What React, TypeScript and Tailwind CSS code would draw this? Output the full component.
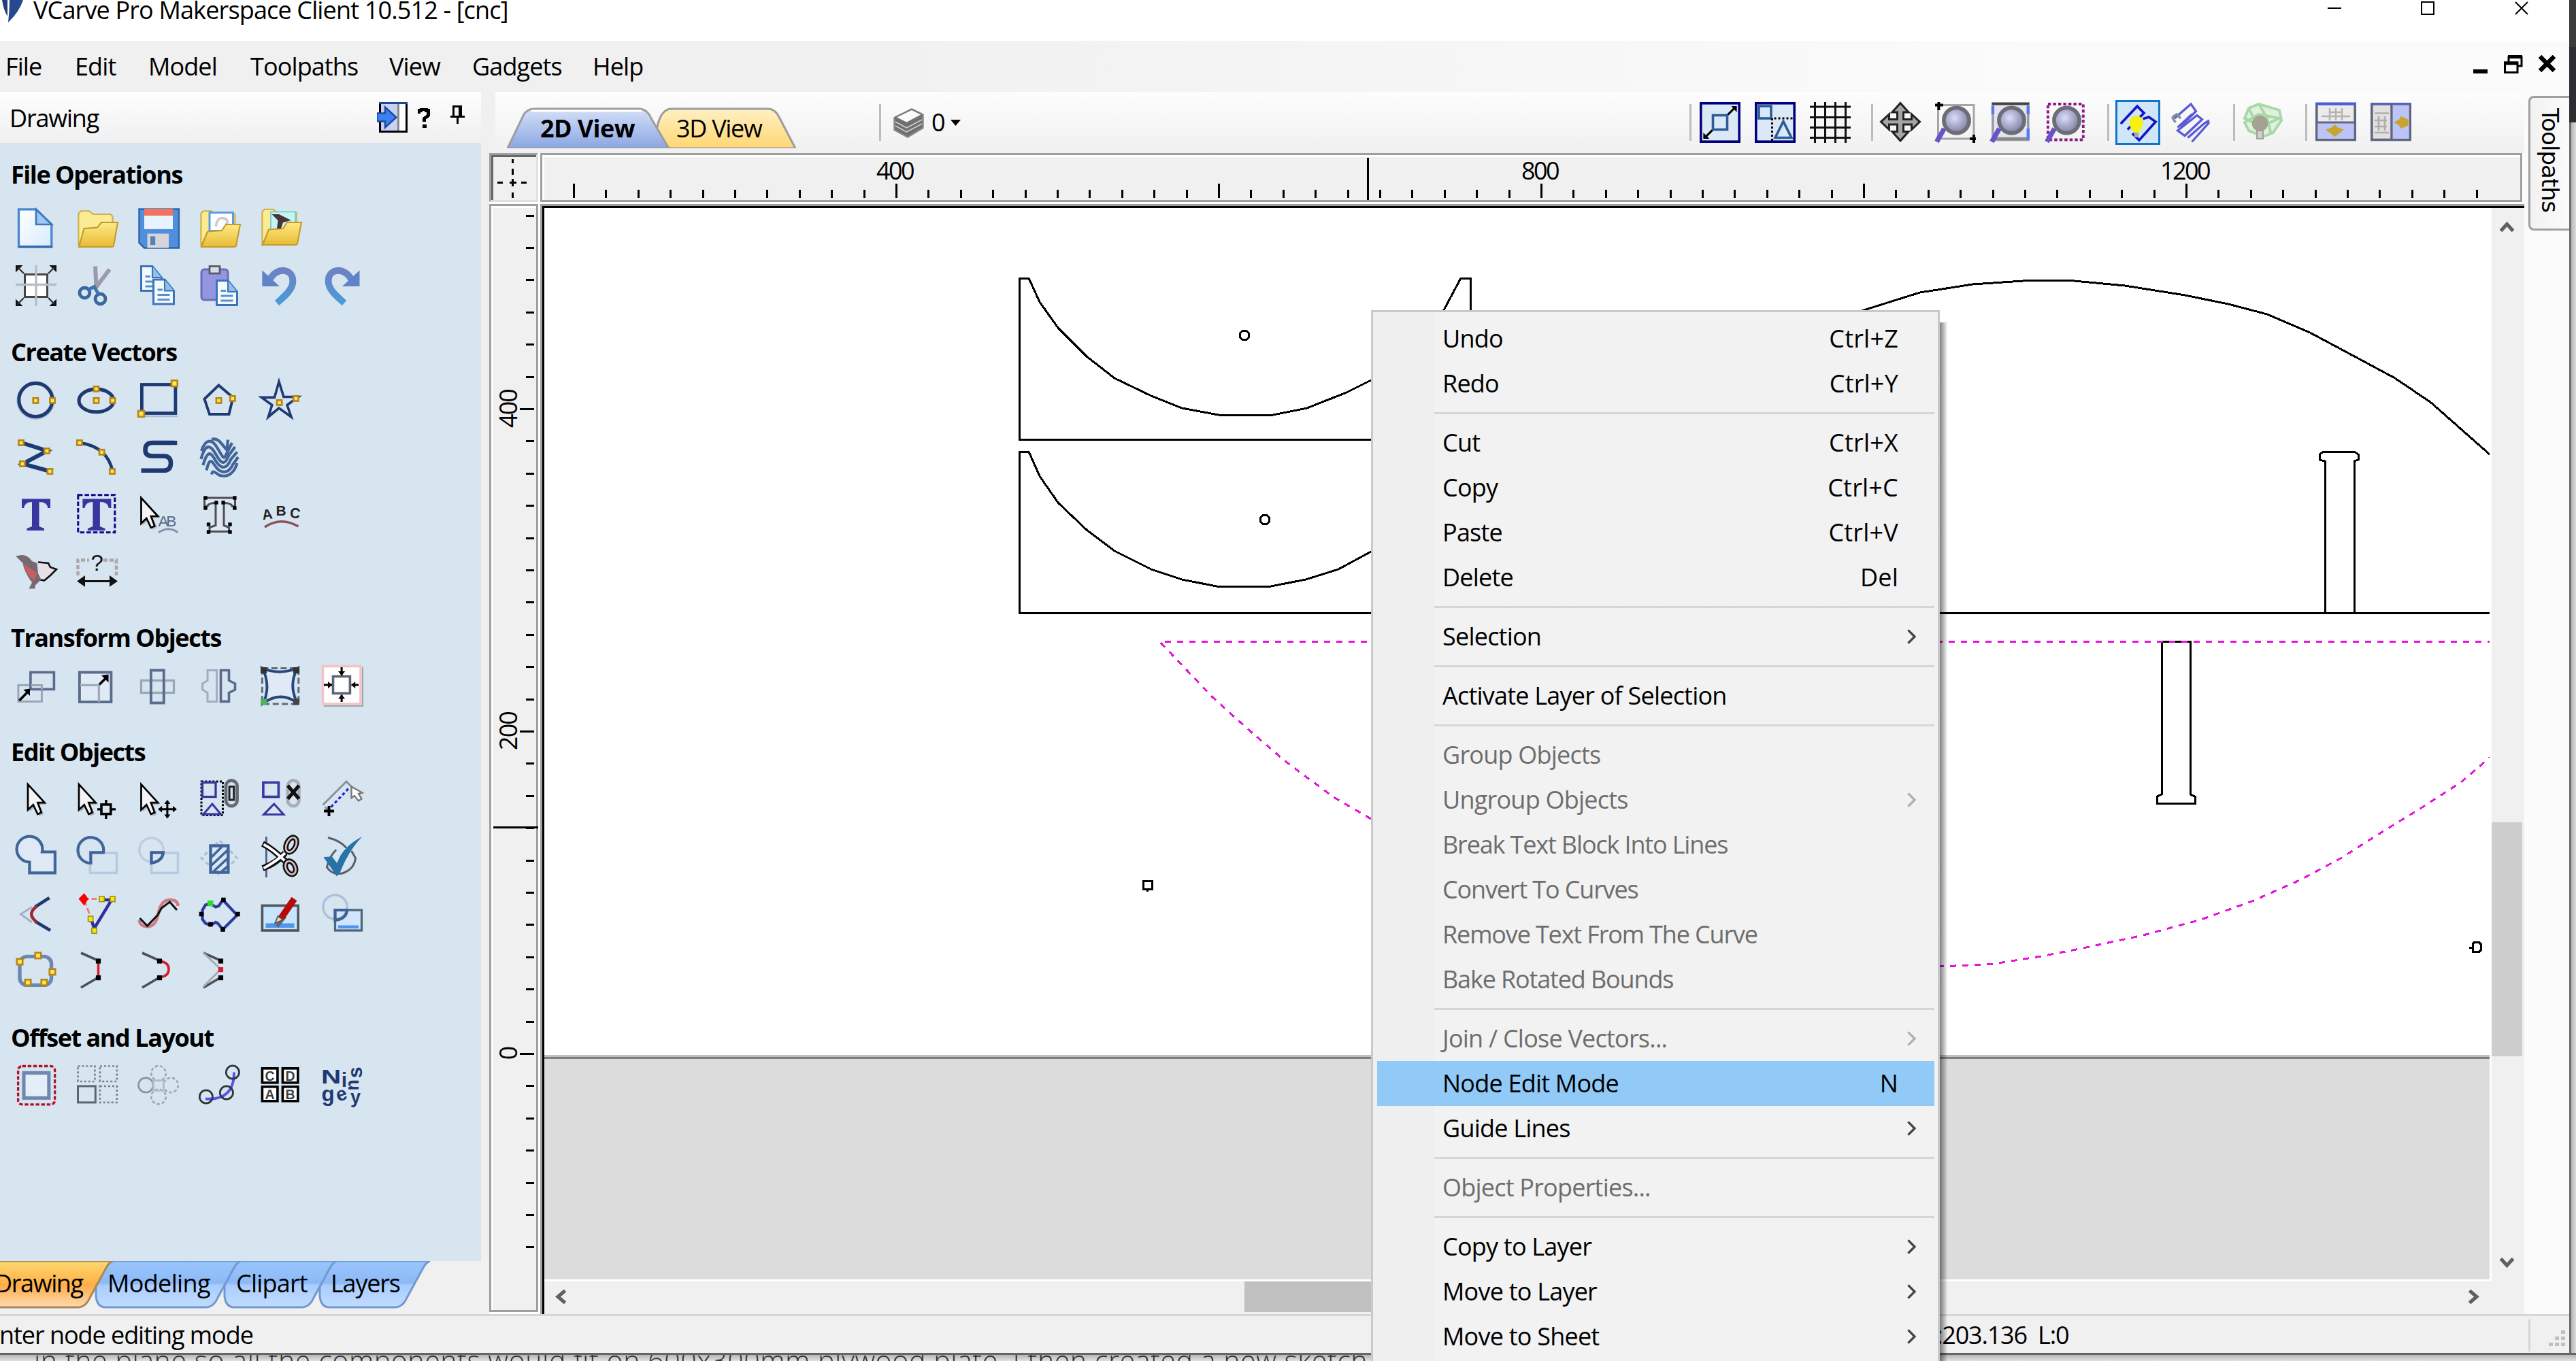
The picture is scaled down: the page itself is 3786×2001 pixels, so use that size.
import React from "react";

const NAVY = "#1f3a73";
const STEEL = "#5a6b8c";

/* ---------- icon helpers (20 x 20 grid) ---------- */
function Ico({ children, className = "w-[60px] h-[60px]" }: { children: React.ReactNode; className?: string }) {
  return (
    <svg viewBox="0 0 20 20" className={className + " shrink-0 overflow-visible"} fill="none">
      {children}
    </svg>
  );
}
const Knob = ({ x, y, s = 2.4 }: { x: number; y: number; s?: number }) => (
  <rect x={x - s / 2} y={y - s / 2} width={s} height={s} fill="#ffe94d" stroke="#b5861b" strokeWidth=".9" />
);
const Arrow = ({ x = 0, y = 0 }: { x?: number; y?: number }) => (
  <g transform={`translate(${x} ${y})`}>
    <path d="M1.8 3 V15.5 L4.4 13 L6.6 17.6 L8.8 16.6 L6.8 12 H10 Z" fill="#00000033" />
    <path d="M1 2 V14.5 L3.6 12 L5.8 16.6 L7.6 15.8 L5.8 11 H9.2 Z" fill="#f4f4f6" stroke="#000" strokeWidth=".9" />
  </g>
);
const FolderFront = () => (
  <path d="M1 19 L4 11.5 L11 11 L13 8 H20 L18 18.5 Q17.8 19 17 19 Z" fill="url(#fold)" stroke="#c39a2c" strokeWidth=".7" />
);
const FolderBack = () => <path d="M.8 18.5 V2.6 L2 1.4 H6 L8 3 H17.5 V9 L4 12Z" fill="#fbeb94" stroke="#cdb04a" strokeWidth=".7" />;
const Page = ({ x, y }: { x: number; y: number }) => (
  <g transform={`translate(${x} ${y})`}>
    <path d="M.5 .5 H6 L10.5 6 V12.5 H.5 Z" fill="#f3f9ff" stroke="#3b74b9" />
    <path d="M6 .5 V6 H10.5" fill="#8fc0ee" stroke="#3b74b9" strokeWidth=".7" />
    <path d="M2.5 5.5 H5 M2.5 8 H8.5 M2.5 10.3 H8.5" stroke="#5d8fcc" />
  </g>
);
const Lens = ({ children }: { children?: React.ReactNode }) => (
  <Ico>
    {children}
    <path d="M4.5 13 L.8 19.5" stroke="#6a52c8" strokeWidth="2.4" />
    <circle cx="10.5" cy="9" r="6.2" fill="url(#lens)" stroke="#6c6d76" strokeWidth="1.9" />
  </Ico>
);

function Defs() {
  return (
    <svg className="absolute h-0 w-0">
      <defs>
        <linearGradient id="fold" x1="0" y1="0" x2="0" y2="1">
          <stop offset="0" stopColor="#ffe987" />
          <stop offset="1" stopColor="#e8bc35" />
        </linearGradient>
        <linearGradient id="page" x1="0" y1="0" x2="1" y2="1">
          <stop offset="0" stopColor="#ffffff" />
          <stop offset="1" stopColor="#d8ebff" />
        </linearGradient>
        <linearGradient id="undo" x1="0" y1="0" x2="0" y2="1">
          <stop offset="0" stopColor="#6d82c4" />
          <stop offset="1" stopColor="#4b9bd8" />
        </linearGradient>
        <radialGradient id="lens" cx=".42" cy=".4" r=".6">
          <stop offset="0" stopColor="#dcddf8" />
          <stop offset="1" stopColor="#7f81a6" />
        </radialGradient>
        <linearGradient id="tab2d" x1="0" y1="0" x2="0" y2="1">
          <stop offset="0" stopColor="#d5e0f8" />
          <stop offset="1" stopColor="#8aa6e2" />
        </linearGradient>
        <linearGradient id="tab3d" x1="0" y1="0" x2="0" y2="1">
          <stop offset="0" stopColor="#fff0c4" />
          <stop offset="1" stopColor="#ffd772" />
        </linearGradient>
        <linearGradient id="tabO" x1="0" y1="0" x2="0" y2="1">
          <stop offset="0" stopColor="#ffd873" />
          <stop offset=".48" stopColor="#ffb347" />
          <stop offset=".5" stopColor="#ffac45" />
          <stop offset="1" stopColor="#ffd9b0" />
        </linearGradient>
        <linearGradient id="tabB" x1="0" y1="0" x2="0" y2="1">
          <stop offset="0" stopColor="#9ac5fd" />
          <stop offset=".48" stopColor="#8cb9f6" />
          <stop offset=".52" stopColor="#a9cdfe" />
          <stop offset="1" stopColor="#c2dcff" />
        </linearGradient>
      </defs>
    </svg>
  );
}

/* ---------- drawing panel icons ---------- */
const fileIcons = [
  [
    <Ico key="new">
      <path d="M1.5 .6 H10 L17.6 8 V19 H1.5 Z" fill="url(#page)" stroke="#4a86cc" strokeWidth="1.1" />
      <path d="M10 .6 V8 H17.6 Z" fill="#9cc9f5" stroke="#3f78bd" strokeWidth=".9" />
      <path d="M1.5 18.8 H18" stroke="#3768ab" strokeWidth="1" />
    </Ico>,
    <Ico key="open">
      <path d="M.8 18.5 V2.6 L2 1.4 H6 L8 3 H16.5 L17.5 4 V9 L4 12Z" fill="#fbeb94" stroke="#cdb04a" strokeWidth=".7" />
      <path d="M1 19 L3.5 10 L10 9.5 L12 7 H20 L18 18.5 Q17.8 19 17 19 Z" fill="url(#fold)" stroke="#c39a2c" strokeWidth=".7" />
    </Ico>,
    <Ico key="save">
      <path d="M.5 .5 H20 V19.5 H3 L.5 17 Z" fill="#4f8fdc" stroke="#2e62a8" strokeWidth=".8" />
      <rect x="3" y=".3" width="14" height="10" fill="#e7f3ff" />
      <rect x="3" y=".3" width="14" height="3.4" fill="#f0725f" />
      <rect x="4.5" y="12.5" width="10.5" height="7" fill="#d6d6da" />
      <rect x="6" y="13.8" width="2.4" height="4.2" fill="#5681bd" />
    </Ico>,
    <Ico key="import">
      <FolderBack />
      <rect x="5" y="2.2" width="11.5" height="9" fill="#fff" stroke="#5c9be0" />
      <path d="M8 9 q1 -5 4 -4 q3 1 1 3" stroke="#c9c9cf" strokeWidth="1.2" />
      <FolderFront />
    </Ico>,
    <Ico key="clip">
      <path d="M.8 17.5 V1.6 L2 .6 H6 L8 2 H17.5 V9 L4 12Z" fill="#fbeb94" stroke="#cdb04a" strokeWidth=".7" />
      <rect x="5" y="1.8" width="12" height="9" fill="#c4f6f1" stroke="#7cc" strokeWidth=".6" />
      <g transform="translate(0 -1)">
        <FolderFront />
      </g>
      <path d="M5.5 3 L9 3 L15 6 L11 7 L10 10 H8 L8.500 6 Z" fill="#4c3336" />
    </Ico>,
  ],
  [
    <Ico key="job">
      <path d="M0 3.500 V0 H3.500 Z M16.500 0 H20 V3.500 Z M0 16.500 V20 H3.500 Z M20 16.500 V20 H16.500 Z" fill="#111" />
      <path d="M1 1 L4 4 M19 1 L16 4 M1 19 L4 16 M19 19 L16 16" stroke="#333" strokeWidth=".8" />
      <rect x="4.500" y="4.500" width="11" height="11" fill="#fff" stroke="#444" />
      <path d="M10 0 V20 M0 9.500 H20" stroke="#b9bcc2" strokeWidth="1.1" />
    </Ico>,
    <Ico key="cut">
      <path d="M9 .5 L9.500 11 M16 2 L8.500 12" stroke="#9b99ab" strokeWidth="2" />
      <circle cx="3.800" cy="13.500" r="2.500" stroke="#3b679d" strokeWidth="1.600" />
      <circle cx="11.500" cy="16.500" r="2.500" stroke="#3b679d" strokeWidth="1.600" />
      <path d="M5.500 12 L8.500 10.500 L10.500 14" stroke="#3f74a8" strokeWidth="1.600" />
    </Ico>,
    <Ico key="copy">
      <Page x={1} y={0} />
      <Page x={7} y={6.500} />
    </Ico>,
    <Ico key="paste">
      <rect x="1" y="2" width="13" height="15" rx="1.500" fill="#9397e0" stroke="#6b6fb8" />
      <rect x="5" y=".5" width="5" height="3.500" fill="#dcdce4" stroke="#55556a" strokeWidth=".9" />
      <Page x={8} y={7} />
    </Ico>,
    <Ico key="undo">
      <path d="M4.500 7 C8 .5 16 1.500 15.800 8 C15.600 12 12 15 8 18.500" stroke="url(#undo)" strokeWidth="3.300" />
      <path d="M.8 2.500 V10.300 H9.300 Z" fill="#5f83c6" />
    </Ico>,
    <Ico key="redo">
      <path d="M14.500 7 C11 .5 3 1.500 3.200 8 C3.400 12 7 15 11 18.500" stroke="url(#undo)" strokeWidth="3.300" />
      <path d="M18.500 2.500 V10.300 H10 Z" fill="#5f83c6" />
    </Ico>,
  ],
];

const createIcons = [
  [
    <Ico key="circle">
      <circle cx="9.800" cy="10.300" r="9" stroke="#9fb2d3" strokeWidth=".8" opacity=".7" />
      <circle cx="9.800" cy="10" r="8.200" stroke={NAVY} strokeWidth="1.700" />
      <Knob x={9.800} y={10.300} />
      <Knob x={18} y={10.300} />
    </Ico>,
    <Ico key="ellipse">
      <ellipse cx="9.500" cy="10.300" rx="8.500" ry="5.600" stroke={NAVY} strokeWidth="1.700" />
      <Knob x={9.500} y={4.600} />
      <Knob x={9.500} y={10.300} />
      <Knob x={17.500} y={10.300} />
    </Ico>,
    <Ico key="rect">
      <rect x="1.800" y="2.500" width="16.500" height="14" stroke={NAVY} strokeWidth="1.600" />
      <path d="M1 18 H19.500" stroke="#a9bbd8" strokeWidth=".8" />
      <Knob x={17.800} y={1.900} s={2.900} />
      <Knob x={1.500} y={16.800} s={2.900} />
    </Ico>,
    <Ico key="poly">
      <path d="M9.500 2.800 L16.500 8.800 L14.500 17 H5 L2.500 9.500 Z" stroke={NAVY} strokeWidth="1.300" />
      <Knob x={9.500} y={10.300} />
      <Knob x={16.300} y={9.300} />
    </Ico>,
    <Ico key="star">
      <path d="M9 1 L11.300 8.500 H18.500 L13 12.500 L15 18.300 L9 14 L3.800 18.300 L5.600 12.500 L.5 8.800 H6.800 Z" stroke={NAVY} strokeWidth="1.200" />
      <Knob x={9.200} y={11.300} />
      <Knob x={17.300} y={9.300} />
    </Ico>,
  ],
  [
    <Ico key="pl">
      <path d="M3 3 L15.500 7 L3.500 13.300 L17 17" stroke={NAVY} strokeWidth="2" />
      <Knob x={2.700} y={3} />
      <Knob x={15.300} y={7} />
      <Knob x={3.300} y={13.300} />
      <Knob x={16.800} y={17} />
    </Ico>,
    <Ico key="arc">
      <path d="M1.500 3 Q15 5 17.500 17" stroke={NAVY} strokeWidth="1.500" />
      <Knob x={1.300} y={3} />
      <Knob x={12.200} y={7.600} />
      <Knob x={17.300} y={17} />
    </Ico>,
    <Ico key="s">
      <path d="M18 2 V3 H7 Q3.500 3 3.500 6.500 Q3.500 9.500 7 9.500 H12.500 Q16 9.500 16 13 Q16 16.600 12.500 16.600 H1.500" stroke={NAVY} strokeWidth="2.200" />
    </Ico>,
    <Ico key="wave">
      <g stroke="#426497" strokeWidth="1.400">
        <path d="M1 7 C3 1 6 1 8.500 5 C11 9 12 12 13 9 L16 3" />
        <path d="M.8 11 C3 3 5.500 4 8 8.500 C11 14 12.500 14 14.500 9 L17.500 5" />
        <path d="M1.800 14 C3.500 8 5 6.500 7.500 11 C10 15.500 13 17 15.500 11 L18.500 7.500" />
        <path d="M3.500 16.500 C4.500 12 5.500 10.500 7.500 14 C10 18 14 19 16.500 13.500 L19 10" />
        <path d="M6 18.500 C6.500 16 7.500 17.500 10 19 C14 20 17 18 18.500 13" />
        <path d="M6 1.300 C9.500 .3 11 4 13.500 6.500 L14 1.500" />
      </g>
    </Ico>,
  ],
  [
    <Ico key="t">
      <path d="M3 2.500 H17 V7 H15.800 Q15.500 4 11.500 4 V16 L14 17 V18 H5.500 V17 L8 16 V4 Q4.500 4 4 7 H3 Z" fill="#37379f" />
    </Ico>,
    <Ico key="tbox">
      <rect x=".6" y=".6" width="18" height="18.300" stroke="#0b0b8a" strokeWidth="1" strokeDasharray="2.200 1" />
      <path d="M2.800 2.500 H16.800 V7 H15.600 Q15.300 4 11.300 4 V16 L13.800 17 V18 H5.300 V17 L7.800 16 V4 Q4.300 4 3.800 7 H2.800 Z" fill="#37379f" />
    </Ico>,
    <Ico key="tsel">
      <Arrow x={.5} y={0} />
      <text x="9.800" y="16" className="font-['Liberation_Sans']" fontSize="7.600" fill="#5d6a88" textLength="9">AB</text>
      <path d="M10 19 Q15 15.500 19.500 19" stroke="#8793ad" />
    </Ico>,
    <Ico key="tnode">
      <path d="M2.500 2 H17.500 V6 H16 Q15.500 4.500 12 4.500 V15.500 L14.500 16.500 V18.500 H5 V16.500 L8 15.500 V4.500 Q4.500 4.500 4 6 H2.500 Z" fill="#dfe8f2" stroke="#4d4f55" strokeWidth="1" />
      {[[3, 2], [17.300, 2], [3, 7], [17.300, 7], [8.300, 4.300], [11.700, 4.300], [4.500, 15], [15, 15], [4.500, 18.700], [15, 18.700]].map(([x, y], i) => (
        <rect key={i} x={x - .9} y={y - .9} width="1.800" height="1.800" fill="#000" />
      ))}
    </Ico>,
    <Ico key="tcurve">
      <text x="1" y="12.500" className="font-['Liberation_Sans'] font-bold" fontSize="7" fill="#222" transform="rotate(-8 3 12)">A</text>
      <text x="7.500" y="10.500" className="font-['Liberation_Sans'] font-bold" fontSize="7" fill="#222">B</text>
      <text x="14" y="11.800" className="font-['Liberation_Sans'] font-bold" fontSize="7" fill="#222" transform="rotate(8 16 12)">C</text>
      <path d="M2 16.300 Q10 11 18.500 16" stroke="#8d5158" strokeWidth="1.200" />
    </Ico>,
  ],
  [
    <Ico key="bird">
      <path d="M11 5.500 L16 6 L17 8 L20 9 L17 12 L14 14.500 L11.500 14" fill="#e9dfe6" stroke="#111" strokeWidth=".9" />
      <path d="M0 2.500 L3 2 Q6 2 8 5 L10.500 6 L11 11 L12.500 14 L9.500 17 V18.500 H6.500 L8 15.500 Q4 10 3.500 6 Z" fill="#77696f" />
      <path d="M4 7 Q5.500 12 9 14.500 L10.500 11 Q8 9 5 7Z" fill="#c8605f" />
    </Ico>,
    <Ico key="dim">
      <path d="M.5 12 V4.500 H6 M13 4.500 H19.300 V12" stroke="#b0a6a8" strokeWidth="1.500" strokeDasharray="2 1" />
      <text x="6.800" y="9.500" className="font-['Liberation_Sans']" fontSize="11" fill="#111">?</text>
      <path d="M1 14.800 H19" stroke="#111" strokeWidth="1" />
      <path d="M0 14.800 L4 12 V17.600Z M20 14.800 L16 12 V17.600Z" fill="#111" />
    </Ico>,
  ],
];

const transformIcons = [
  [
    <Ico key="mv">
      <rect x="1.300" y="9.800" width="11.500" height="8" stroke="#9ba5b5" />
      <rect x="7.300" y="3.500" width="11.500" height="8.300" fill="#d7e5f1" stroke={STEEL} strokeWidth="1.200" />
      <path d="M7.300 9.800 H12.800 V12" stroke="#9ba5b5" />
      <path d="M1.800 17.300 L6 13" stroke="#000" strokeWidth="1.200" />
      <path d="M7 11.500 V15 L3.800 12 Z" fill="#000" />
    </Ico>,
    <Ico key="sc">
      <rect x="1.300" y="3.500" width="15.500" height="14.500" fill="#dfeaf5" stroke={STEEL} strokeWidth="1.300" />
      <path d="M1.500 9.800 H10.800 V18" stroke="#a0a9b8" strokeWidth="1.100" />
      <path d="M11 9.500 L15 5.500" stroke="#000" strokeWidth="1.200" />
      <path d="M15.500 4.500 V8.500 L12 5 Z" fill="#000" />
    </Ico>,
    <Ico key="rot">
      <rect x="1.500" y="7.500" width="16" height="6" stroke="#9ba5b5" strokeWidth="1.100" />
      <rect x="6.300" y="2.500" width="6.300" height="16" stroke={STEEL} strokeWidth="1.300" />
    </Ico>,
    <Ico key="mir">
      <path d="M8.500 2.500 H4 V7.500 L1.500 9 V12 L4 13.500 V17.800 H8.500 Z" stroke="#a3adbb" strokeWidth="1" />
      <path d="M10.500 2.500 H14.500 V7.500 L17.500 9 V12 L14.500 13.500 V17.800 H10.500 Z" stroke={STEEL} strokeWidth="1.200" />
    </Ico>,
    <Ico key="dist">
      <rect x=".8" y="1.500" width="17.800" height="17.500" stroke="#666b73" strokeDasharray="3 1.500" />
      <path d="M1 1.500 Q9 5 18 1.500 Q13.500 10 18 18.500 Q10 12.500 1.500 18.500 Q5 10 1 1.500 Z" fill="#e0eaf5" stroke="#27467f" strokeWidth="1.300" />
      <rect x="0" y="1" width="3" height="3" fill="#333" />
      <rect x="16" y="1" width="3" height="3" fill="#333" />
      <rect x="16" y="16.500" width="3" height="3" fill="#444" />
      <rect x="0" y="16.500" width="3" height="3" fill="#4cb55a" />
    </Ico>,
    <Ico key="align">
      <path d="M1 20 H20 V1" stroke="#9aa" strokeWidth=".7" />
      <rect x=".5" y=".5" width="18.500" height="18.500" fill="#fff" stroke="#f5c2c6" strokeWidth="1.200" />
      <rect x="5.500" y="5.500" width="8.300" height="8.300" stroke="#5c6474" strokeWidth="1.200" />
      <path d="M9.700 1 V5 M9.700 14.500 V18 M1 9.700 H5 M14.500 9.700 H18" stroke="#000" strokeWidth="1" />
      <path d="M8 3 H11.400 L9.700 5Z M8 16.400 H11.400 L9.700 14.500Z M3 8 V11.400 L5 9.700Z M16.400 8 V11.400 L14.500 9.700Z" fill="#000" />
    </Ico>,
  ],
];

const editIcons = [
  [
    <Ico key="a1"><Arrow x={5} y={.4} /></Ico>,
    <Ico key="a2">
      <Arrow x={0} y={.4} />
      <rect x="12" y="12.300" width="4.600" height="4.600" stroke="#000" strokeWidth="1.200" />
      <path d="M14.300 10 V12.500 M14.300 17 V19.300 M10 14.600 H12 M16.600 14.600 H19" stroke="#000" strokeWidth="1.100" />
    </Ico>,
    <Ico key="a3">
      <Arrow x={.5} y={.4} />
      <path d="M14.300 10.500 V18.700 M10.200 14.600 H18.400" stroke="#000" strokeWidth="1" />
      <path d="M12.800 12 L14.300 10 L15.800 12Z M12.800 17.200 L14.300 19.200 L15.800 17.200Z M11.700 13 L9.700 14.600 L11.700 16.200Z M17 13 L19 14.600 L17 16.200Z" fill="#000" />
    </Ico>,
    <Ico key="grp">
      <rect x="1" y="1" width="10.500" height="16.500" stroke="#000" strokeDasharray="1 .8" />
      <rect x="1.500" y="1.500" width="6.500" height="7" stroke="#37379f" strokeWidth="1.100" />
      <path d="M6.300 12 L10.500 17 H2 Z" stroke="#37379f" />
      <rect x="13" y=".5" width="5.500" height="12.500" rx="2.700" stroke="#666a72" strokeWidth="1.600" />
      <rect x="14.700" y="3.500" width="2.200" height="6.500" stroke="#222" strokeWidth="1" />
    </Ico>,
    <Ico key="ungrp">
      <rect x="1.300" y="1.500" width="7.500" height="7" stroke="#37379f" strokeWidth="1.200" />
      <path d="M6.600 12 L11.300 17.200 H1.500 Z" stroke="#37379f" />
      <rect x="13.300" y=".5" width="5.500" height="12.500" rx="2.700" stroke="#a9adb5" strokeWidth="1.600" />
      <path d="M13.300 3 L18.800 9.500 M18.800 3 L13.300 9.500" stroke="#111" strokeWidth="1.700" />
    </Ico>,
    <Ico key="measure">
      <path d="M.5 12.500 L12 1 L14.500 3.500 M1.500 13.500 L3 15" stroke="#8b8f96" />
      <path d="M4.500 13.500 L13.500 4" stroke="#2525cf" strokeDasharray="1.500 1.200" strokeWidth="1.100" />
      <path d="M1 15.500 H6 M3.500 13 V18" stroke="#000" strokeWidth="1.300" />
      <path d="M14.500 3.500 V9 L16 8 L18 10.500 L19.500 9.500 L18 7 L19.800 6.500 Z" fill="#fff" stroke="#777" strokeWidth=".8" />
    </Ico>,
  ],
  [
    <Ico key="weld">
      <path d="M6.800 12.500 A6.300 6.300 0 1 1 13 7.500 H19.300 V17.800 H6.800 Z" fill="#dfe9f5" stroke="#40659b" strokeWidth="1.400" />
    </Ico>,
    <Ico key="sub">
      <rect x="6.500" y="8" width="13" height="9.800" stroke="#b9cae0" strokeWidth="1.200" />
      <path d="M6.800 13 A6.300 6.300 0 1 1 13 7.800 H6.800 Z" stroke="#40659b" strokeWidth="1.400" />
    </Ico>,
    <Ico key="int">
      <circle cx="6.500" cy="6.500" r="5.900" stroke="#bccbe0" strokeWidth="1.100" />
      <rect x="6.500" y="8" width="13" height="9.800" stroke="#b9cae0" strokeWidth="1.200" />
      <path d="M6.500 7.800 H12.300 Q12 12 6.500 13 Z" stroke="#3d6096" strokeWidth="1.400" />
    </Ico>,
    <Ico key="hatch">
      <path d="M10 2 L18.500 10.500 L10 19 L1 10.500 Z" stroke="#aabdd6" strokeDasharray="2 1.500" />
      <rect x="5.500" y="4.500" width="8.600" height="13" fill="#dce7f3" stroke="#40659b" strokeWidth="1.500" />
      <path d="M6 10 L11.500 4.500 M6 14 L14 6.500 M7 17 L14 10.500 M11 17 L14 14.500" stroke="#40659b" strokeWidth="1.200" />
    </Ico>,
    <Ico key="trim">
      <path d="M2.800 0 V20" stroke="#4a5d80" strokeWidth=".9" />
      <path d="M1 3.500 Q6 6 12 12 M1 15.500 Q8 13 12 8" stroke="#111" strokeWidth="3" />
      <path d="M1.500 3.800 Q6 6 12 12 M1.500 15.500 Q8 12 12 8" stroke="#fff" strokeWidth="1.300" />
      <ellipse cx="15" cy="4" rx="2.300" ry="3.800" transform="rotate(25 15 4)" fill="#d7e5f1" stroke="#111" strokeWidth="2.600" />
      <ellipse cx="15" cy="4" rx="2.300" ry="3.800" transform="rotate(25 15 4)" stroke="#d7bfc4" strokeWidth=".9" />
      <ellipse cx="14.500" cy="15.500" rx="2.300" ry="3.400" transform="rotate(-25 14 15)" fill="#d7e5f1" stroke="#111" strokeWidth="2.600" />
      <ellipse cx="14.500" cy="15.500" rx="2.300" ry="3.400" transform="rotate(-25 14 15)" stroke="#d7bfc4" strokeWidth=".9" />
    </Ico>,
    <Ico key="check">
      <path d="M3 .5 Q9 2 12 5.500 M7 6.500 Q3.500 10 2.500 15 Q5 19 10 18 Q16 16 16.500 10.500 L14.500 7" stroke="#55606c" />
      <path d="M.8 10 L5 9.800 L7.500 13 Q10 5 19.800 0 Q13 7 9 17.500 L7.300 19.500 Z" fill="#2873a6" />
    </Ico>,
  ],
  [
    <Ico key="fillet">
      <path d="M8 6.500 L2.500 10 L8 14" stroke="#a4b0c2" />
      <path d="M16.500 2 L9.500 6.500 M9.500 13.500 L17 18" stroke={NAVY} strokeWidth="1.600" />
      <path d="M10.500 6 Q5 10 10.500 14" stroke="#99283b" strokeWidth="1.500" />
    </Ico>,
    <Ico key="extend">
      <path d="M3.500 2.500 H12" stroke="#f08080" strokeWidth="1" strokeDasharray="2.500 1.200" />
      <path d="M3.500 3 L7 12" stroke="#f08080" strokeDasharray="3 1.200" />
      <path d="M7 12.500 L8.500 17 L17 3 H12" stroke="#2e2f9b" strokeWidth="1.500" />
      <path d="M3.500 .5 L5 2.500 L3.500 5 L1.500 2.500Z" fill="#f00" stroke="#f00" />
      <rect x="11" y="1.300" width="2.400" height="2.600" fill="#f4e614" stroke="#9b8b10" strokeWidth=".5" />
      <rect x="16.300" y="1.300" width="2.400" height="2.600" fill="#f4e614" stroke="#9b8b10" strokeWidth=".5" />
      <rect x="5.500" y="11" width="2.400" height="2.600" fill="#f4e614" stroke="#9b8b10" strokeWidth=".5" />
      <rect x="7.300" y="16.800" width="2.400" height="2.600" fill="#f4e614" stroke="#9b8b10" strokeWidth=".5" />
    </Ico>,
    <Ico key="curvefit">
      <path d="M.5 13 Q1 16 4.500 16.200 Q9 16 10 9 Q11.500 3 15.500 3 Q19.500 3 19.500 6" stroke="#cf7c84" strokeWidth="1.500" />
      <path d="M.8 12 L4.500 15.800 L9.500 10.500 L11.500 7 L15.500 4 L19 8" stroke="#111" strokeWidth="1" />
    </Ico>,
    <Ico key="close">
      <path d="M5 4.800 L3 5.500 L1.500 8 V12.500 L3 14.500 L5.500 15.500 L8 14 L9 14.500 L11.500 17.500 L18.500 10.500 L11.500 3 L9.500 6 L8 6.500 L5.500 5 Z" stroke="#2b3b9c" strokeWidth="1.400" />
      {[[11.800, 3], [1, 10], [18.800, 10], [5.500, 15], [11.500, 17.500]].map(([x, y], i) => (
        <rect key={i} x={x - 1.100} y={y - 1.100} width="2.200" height="2.200" fill="#000" />
      ))}
      <rect x="4" y="3.300" width="2.800" height="2.800" fill="#2bdc2b" />
    </Ico>,
    <Ico key="bmp">
      <rect x=".8" y="5.800" width="17.600" height="12.200" fill="#c9e4fd" stroke="#4f565f" strokeWidth="1.200" />
      <rect x="2.500" y="14.500" width="14" height="2.200" fill="#4f95f0" />
      <path d="M8 16 L12 11" stroke="#5f6a78" strokeWidth="1.800" />
      <path d="M10 12 L16.500 2.500" stroke="#b80a0a" strokeWidth="3.200" />
      <path d="M7 14.500 L8.500 11 L11 12.800 Z" fill="#e8d6c2" stroke="#555" strokeWidth=".6" />
    </Ico>,
    <Ico key="crop">
      <rect x="6.500" y="8" width="13" height="10" fill="#cfe6fc" stroke="#4f6679" strokeWidth="1.100" />
      <rect x="8" y="15.500" width="10" height="1.500" fill="#4f95f0" />
      <circle cx="6.500" cy="6.500" r="5.900" stroke="#aebfd6" strokeWidth="1.100" />
      <path d="M6.500 8 H12.300 Q12 12.500 6.500 13 Z" stroke="#3d6096" strokeWidth="1.400" />
    </Ico>,
  ],
  [
    <Ico key="nodes">
      <rect x="2" y="2.800" width="15.500" height="14" rx="3.500" stroke="#6d87b3" strokeWidth="1.800" />
      <Knob x={11} y={2.300} s={2.800} />
      <Knob x={2} y={5.300} s={2.800} />
      <Knob x={18} y={10.300} s={2.800} />
      <Knob x={6} y={15.500} s={2.800} />
      <Knob x={14} y={15.500} s={2.800} />
    </Ico>,
    <Ico key="j1">
      <path d="M2 1 L10.500 4.800 M10.500 13 L2 18" stroke="#4b5058" strokeWidth="1.200" />
      <path d="M10.500 5 V13" stroke="#d0202c" strokeWidth="1.200" />
      <rect x="9.300" y="3.800" width="2.400" height="2.400" fill="#000" />
      <rect x="9.300" y="12" width="2.400" height="2.400" fill="#000" />
    </Ico>,
    <Ico key="j2">
      <path d="M2 1 L10.500 4.800 M10.500 13 L2 18" stroke="#4b5058" strokeWidth="1.200" />
      <path d="M10.500 5 Q15 5.500 15 9 Q15 12.500 10.500 13" stroke="#d0202c" strokeWidth="1.200" />
      <rect x="9.300" y="3.800" width="2.400" height="2.400" fill="#000" />
      <rect x="9.300" y="12" width="2.400" height="2.400" fill="#000" />
    </Ico>,
    <Ico key="j3">
      <path d="M2 1 L10.500 4.800 M10.500 13 L2 18" stroke="#4b5058" strokeWidth="1.200" />
      <path d="M2 1 L10.500 9 L2 17.500" stroke="#a7acb4" />
      <rect x="9.300" y="3.800" width="2.400" height="2.400" fill="#000" />
      <rect x="9.300" y="8" width="2.400" height="2.400" fill="#d0202c" />
      <rect x="9.300" y="12" width="2.400" height="2.400" fill="#000" />
    </Ico>,
  ],
];

const offsetIcons = [
  [
    <Ico key="off">
      <rect x="1.200" y=".5" width="18" height="18.800" rx="2" stroke="#b11226" strokeWidth="1.100" strokeDasharray="1.800 .9" />
      <rect x="4" y="3.800" width="12.300" height="12.300" fill="#e5eef8" stroke="#6f88b0" strokeWidth="1.700" />
    </Ico>,
    <Ico key="array">
      <rect x=".5" y=".5" width="8.300" height="7.500" stroke="#7b828c" strokeWidth=".9" strokeDasharray="1 1" />
      <rect x="11.300" y=".5" width="8.300" height="7.500" stroke="#7b828c" strokeWidth=".9" strokeDasharray="1 1" />
      <rect x="11.300" y="10.300" width="8.300" height="8" stroke="#7b828c" strokeWidth=".9" strokeDasharray="1 1" />
      <rect x=".5" y="10.300" width="8.600" height="8" stroke="#5f656d" strokeWidth="1" />
    </Ico>,
    <Ico key="circ">
      <circle cx="10" cy="4" r="3.600" stroke="#9aa1ab" strokeWidth=".8" strokeDasharray="1.500 1" />
      <circle cx="10" cy="15.500" r="3.600" stroke="#9aa1ab" strokeWidth=".8" strokeDasharray="1.500 1" />
      <circle cx="16" cy="9.800" r="3.600" stroke="#9aa1ab" strokeWidth=".8" strokeDasharray="1.500 1" />
      <circle cx="3.800" cy="9.800" r="3.600" stroke="#8d949e" strokeWidth=".9" />
      <rect x="7.500" y="7.500" width="5" height="5" stroke="#b5bbc4" strokeWidth=".8" />
    </Ico>,
    <Ico key="path">
      <path d="M3 16.500 Q17 17.500 17 3.500" stroke="#5454ee" strokeWidth="1.300" />
      <circle cx="16.300" cy="3.500" r="3.200" stroke="#30343a" strokeWidth=".9" />
      <circle cx="13.300" cy="13.500" r="3.200" stroke="#30343a" strokeWidth=".9" />
      <circle cx="3.300" cy="15.500" r="3.200" stroke="#30343a" strokeWidth=".9" />
    </Ico>,
    <Ico key="nest">
      {[["C", 0, 1], ["D", 10, 1], ["A", 0, 10], ["B", 10, 10]].map(([c, x, y]) => (
        <g key={c as string} transform={`translate(${x} ${y})`}>
          <rect x=".8" y=".6" width="7.500" height="7" fill="#fff" stroke="#000" strokeWidth="1.200" />
          <text x="4.500" y="6.500" textAnchor="middle" fontSize="6.500" className="font-['Liberation_Sans'] font-bold" fill="#3c3f45">{c}</text>
        </g>
      ))}
    </Ico>,
    <Ico key="words">
      <g fill={NAVY} className="font-['Liberation_Sans'] font-bold">
        <text transform="translate(-.3 9) scale(1.350 1)" fontSize="10">N</text>
        <text x="9.600" y="10.500" fontSize="10">i</text>
        <text x="-.2" y="17.500" fontSize="10.500">g</text>
        <text transform="translate(8 18) rotate(-18)" fontSize="9.500">e</text>
        <text transform="translate(19.800 6.300) rotate(-90)" fontSize="10">s</text>
        <text transform="translate(13 7) rotate(90)" fontSize="9">u</text>
        <text transform="translate(14 18.500)" fontSize="9">y</text>
      </g>
    </Ico>,
  ],
];

function Section({ title, rows, first = false }: { title: string; rows: React.ReactNode[][]; first?: boolean }) {
  return (
    <section className="flex flex-col">
      <h2 className="h-12 pl-4 text-[36px] leading-[48px] font-bold tracking-[-1.450px] text-black">{title}</h2>
      <div className={(first ? "mt-[25px]" : "mt-[16px]") + " flex flex-col gap-6 pl-[23px]"}>
        {rows.map((r, i) => (
          <div key={i} className="flex gap-[30px]">{r}</div>
        ))}
      </div>
    </section>
  );
}

function PanelTabs() {
  const tab = (l: number, r: number) => `M${l} 0 V52 Q${l + 2} 68 ${l + 14} 68 H${r - 52} Q${r - 40} 68 ${r - 34} 54 L${r - 10} 10 Q${r - 6} 2 ${r} 0 Z`;
  return (
    <div className="relative h-[78px] w-[707px]">
      <svg viewBox="0 0 707 78" className="absolute inset-0 h-full w-full">
        <path d={tab(470, 632)} fill="url(#tabB)" stroke="#7199cf" strokeWidth="3" />
        <path d={tab(330, 495)} fill="url(#tabB)" stroke="#7199cf" strokeWidth="3" />
        <path d={tab(141, 354)} fill="url(#tabB)" stroke="#7199cf" strokeWidth="3" />
        <path d={tab(-30, 166)} fill="url(#tabO)" stroke="#a88858" strokeWidth="3" />
      </svg>
      <div className="relative flex h-[65px] items-center">
        <span className="-ml-[8px] w-[166px] tracking-[-1.400px]">Drawing</span>
        <span className="w-[189px] tracking-[-.650px]">Modeling</span>
        <span className="w-[139px] tracking-[-.8px]">Clipart</span>
        <span className="tracking-[-1.200px]">Layers</span>
      </div>
    </div>
  );
}

function LeftPanel() {
  return (
    <aside className="flex w-[707px] shrink-0 flex-col">
      <header className="flex h-[75px] items-center bg-linear-to-b from-[#fdfdfd] to-[#f0f0f0] pl-[14px]">
        <span className="w-[540px] pt-[2px] tracking-[-1.200px]">Drawing</span>
        <svg viewBox="0 0 15 15" className="h-[45px] w-[45px]">
          <rect x="1.500" y=".5" width="13" height="14" fill="#c9d0f5" stroke="#000" />
          <rect x="11" y="1" width="3.500" height="13" fill="#fff" />
          <path d="M14.500 0 V15" stroke="#000" />
          <path d="M1 .5 H15" stroke="#24468c" />
          <path d="M10.500 1 V14" stroke="#888" />
          <path d="M0 5.500 H4 V2.500 L9.500 7.500 L4 12.500 V9.500 H0 Z" fill="#3b82f0" stroke="#1c4a9c" strokeWidth=".8" />
        </svg>
        <svg viewBox="0 0 7 10" className="ml-[14px] h-[30px] w-[21px]" shapeRendering="crispEdges">
          <path d="M1 3 V1.500 H2 V1 H4.500 V1.500 H5.500 V4 L3.500 5.500 V7" stroke="#000" strokeWidth="1.600" fill="none" />
          <rect x="2.500" y="8.300" width="2" height="1.700" />
        </svg>
        <svg viewBox="0 0 7 9" className="ml-[28px] -mt-[8px] h-[27px] w-[21px]" shapeRendering="crispEdges">
          <path d="M1.500 5 V.5 H5 V5 M4.500 0 V5 M0 5.500 H7 M3.500 5.500 V9" stroke="#000" strokeWidth="1" fill="none" />
        </svg>
      </header>
      <div className="flex h-[1644px] flex-col gap-[44px] bg-[#d7e5f1] pt-[23px]">
        <Section title="File Operations" rows={fileIcons} first />
        <Section title="Create Vectors" rows={createIcons} />
        <Section title="Transform Objects" rows={transformIcons} />
        <Section title="Edit Objects" rows={editIcons} />
        <Section title="Offset and Layout" rows={offsetIcons} />
      </div>
      <PanelTabs />
    </aside>
  );
}

/* ---------- view toolbar ---------- */
const Sep = ({ className = "" }: { className?: string }) => <i className={"block h-[54px] w-[3px] shrink-0 bg-[#bcbcbc] " + className} />;
const Plane = () => (
  <g stroke="#5a5ad8" strokeWidth="1.100">
    <path d="M5 12 L12.500 4.500 L10 1 L2 8 M10.500 6 L3.500 12.500" />
    <path d="M3.500 14 L13 6.500 L15.500 8.500 L7 16.500 Z M8.500 17.500 L16.500 10.500 L19 9 M10.500 19.500 L19 10" />
    <path d="M.8 7.500 L3 6 L5 8 M.8 7.500 L2.500 10" stroke="#8a8a98" />
  </g>
);

function Toolbar() {
  return (
    <div className="ml-[9px] flex h-[90px] items-center bg-linear-to-b from-[#fdfdfd] to-[#f0f0f0]">
      <div className="relative ml-[17px] h-[60px] w-[430px] self-end mb-[7px]">
        <svg viewBox="0 0 430 60" className="absolute inset-0 h-full w-full">
          <path d="M215 60 L222 24 Q228 2 242 2 H384 Q394 2 400 14 L424 60 Z" fill="url(#tab3d)" stroke="#9d9d9d" strokeWidth="3" />
          <path d="M1 60 L24 12 Q29 2 40 2 H194 Q206 2 212 16 L238 60 Z" fill="url(#tab2d)" stroke="#9d9d9d" strokeWidth="3" />
          <path d="M36 5 H198" stroke="#fff" strokeWidth="3" />
        </svg>
        <div className="relative flex h-full items-center pt-[2px]">
          <span className="ml-[49px] w-[200px] font-bold tracking-[-.6px]">2D View</span>
          <span className="tracking-[-1.300px]">3D View</span>
        </div>
      </div>
      <Sep className="ml-[117px]" />
      <svg viewBox="0 0 15 15" className="ml-[18px] h-[45px] w-[45px]">
        <path d="M.5 5 L9 .8 L14.500 3.500 V10 L7 14.500 L.5 11 Z" fill="#6f6f6f" stroke="#888" strokeWidth=".8" />
        <path d="M1 4.800 L9 1 L14 3.500 L6.500 7.500 Z" fill="#fafafa" stroke="#777" strokeWidth=".6" />
        <path d="M1 7 L6.500 10 L14 6 M1 9 L6.500 12 L14 8" stroke="#ccc" strokeWidth=".6" fill="none" />
      </svg>
      <span className="ml-[11px] w-[20px]">0</span>
      <svg viewBox="0 0 5 3" className="ml-[8px] h-[9px] w-[15px]"><path d="M0 0 H5 L2.500 3Z" /></svg>

      <Sep className="ml-[1071px]" />
      <div className="ml-[12px] flex items-center gap-[21px]">
        <Ico>
          <rect x=".6" y=".6" width="18.800" height="18.800" fill="#dbe8f6" stroke="#000080" strokeWidth="1.200" />
          <rect x="6.500" y="6.500" width="7" height="7" stroke="#2b5c98" strokeWidth="1.200" />
          <path d="M13.800 6.200 L17.500 2.500 M2.500 17.500 L6.200 13.800" stroke="#000" />
          <path d="M15.500 2 H18.200 V5 Z M1.800 15 V18 H4.800 Z" fill="#000" />
        </Ico>
        <Ico>
          <rect x=".6" y=".6" width="18.800" height="18.800" fill="#dbe8f6" stroke="#000080" strokeWidth="1.200" />
          <rect x="2" y="2" width="6" height="6" stroke="#2b5c98" strokeWidth="1.200" />
          <path d="M8.500 19 V8 H19" stroke="#000" strokeDasharray="1 1" />
          <path d="M14 9.500 L18 17.500 H10 Z" stroke="#2b5c98" strokeWidth="1.200" />
        </Ico>
        <Ico>
          <path d="M2.500 0 V20 M7.500 0 V20 M12.500 0 V20 M17.500 0 V20 M0 2.300 H20 M0 7.500 H20 M0 12.500 H20 M0 17.500 H20" stroke="#111" strokeWidth="1" />
        </Ico>
      </div>
      <Sep className="ml-[30px]" />
      <div className="ml-[10px] flex items-center gap-[21px]">
        <Ico>
          <path d="M10 .5 L14 5 H11.500 V8.500 H15.500 V6 L19.500 9.700 L15.500 13.500 V11 H11.500 V14.500 H14 L10 19 L6 14.500 H8.500 V11 H4.500 V13.500 L.5 9.700 L4.500 6 V8.500 H8.500 V5 H6 Z" fill="#a5a5a5" stroke="#222" strokeWidth="1" />
        </Ico>
        <Lens>
          <rect x="1.500" y="1.500" width="17.500" height="16.500" stroke="#a6a6a6" strokeWidth="1" />
          <path d="M0 1.500 H4 M1.800 0 V4 M17 18 H20 M19 16 V20" stroke="#000" strokeWidth="1.300" />
        </Lens>
        <Lens>
          <rect x="1.300" y="1" width="17.300" height="17.500" fill="#e3e5f0" stroke="#9a9aa4" strokeWidth="1.200" />
          <path d="M.8 .8 H19.200" stroke="#444" strokeWidth="1.300" />
          <path d="M.8 18 H19.200" stroke="#8a8a8a" strokeWidth="1.500" />
          <path d="M1.300 2 V6 M18.600 2 V6 M18.600 13 V18.500" stroke="#5a78f0" strokeWidth="1.500" />
        </Lens>
        <Lens>
          <rect x="1.300" y="1" width="17.300" height="17.500" stroke="#8b1a86" strokeWidth="1.300" strokeDasharray="1.500 1" />
        </Lens>
      </div>
      <Sep className="ml-[31px]" />
      <div className="ml-[9px] flex h-[66px] w-[66px] items-center justify-center border-3 border-[#0f74cc] bg-[#cfe6f8]">
        <Ico className="w-[57px] h-[57px]">
          <path d="M1 10.500 L9.500 1.500 L13 5 L4.500 13.500 M12.500 8 L15.500 7 L19 9.500 L10.500 19 L7 15.500" stroke="#1414c8" strokeWidth="1.300" />
          <path d="M9 6.500 Q12.500 6.500 12.500 10 Q12 13 10.500 15 H7.800 Q5.500 12.500 5.500 10 Q5.500 6.500 9 6.500Z" fill="#f6f014" />
          <rect x="8" y="15" width="2.300" height="2.500" fill="#aaa" />
        </Ico>
      </div>
      <Ico className="ml-[15px] w-[60px] h-[60px]"><Plane /></Ico>
      <Sep className="ml-[32px]" />
      <Ico className="ml-[11px] w-[60px] h-[60px]">
        <path d="M1 8 L3 3 L8 1 L18 4 L19 9 L15 15 L10 17 L3 14 L1 10 L8 6 L18 8 L9 12 Z M8 1 L12 8 L14 16 M3 3 L6 9" fill="#dff0df" stroke="#a8d8a8" strokeWidth="1.300" />
        <circle cx="8.500" cy="10.500" r="3.900" fill="#a3a293" />
        <rect x="7" y="14" width="3" height="4" fill="#cfcfca" stroke="#999" strokeWidth=".6" />
      </Ico>
      <Sep className="ml-[32px]" />
      <div className="ml-[12px] flex items-center gap-[21px]">
        <Ico>
          <rect x=".6" y="1" width="18.800" height="17.500" fill="#eceaea" stroke="#5e6580" strokeWidth="1.200" />
          <rect x="1.200" y="10.500" width="17.600" height="7.400" fill="#bcc4f7" />
          <path d="M0 .8 H20" stroke="#4a5fd8" strokeWidth="1.300" />
          <path d="M1 10 H19" stroke="#5e6580" strokeWidth="1" />
          <path d="M7 3 V9 M10 3 V9 M13 3 V9 M7 5 H13 M3 7 H17" stroke="#b5b2b2" strokeWidth=".8" />
          <path d="M5 13.500 L8 12.500 L9.500 11 L11 12.500 L14 13.500 L11.500 15.500 L9.500 17 L7.500 15.500Z" fill="#c7a42c" />
        </Ico>
        <Ico>
          <rect x=".6" y="1" width="18.800" height="17.500" fill="#e2e0e0" stroke="#5e6580" strokeWidth="1.200" />
          <rect x="10.500" y="1.600" width="8.300" height="16.300" fill="#bcc4f7" />
          <path d="M0 .8 H20" stroke="#5663b8" strokeWidth="1" />
          <path d="M10.300 1 V18.500" stroke="#5e6580" strokeWidth="1.100" />
          <path d="M2 5.500 H9 M2 9 H8 M2 12 H8 M2 15 H9 M4 7 V14 M7 7 V14" stroke="#b0adad" strokeWidth=".9" />
          <path d="M11.500 10 L14 8.500 L15 7 L18.500 8.500 V11.500 L15 13 L14 11.500Z" fill="#c7a42c" />
        </Ico>
      </div>
    </div>
  );
}

/* ---------- rulers ---------- */
const UNIT = 47.4;
function HRuler() {
  const ticks = Array.from({ length: 60 }, (_, n) => n);
  return (
    <svg viewBox="794 225 2913 72" className="h-[72px] w-[2913px] shrink-0 bg-[#f0f0f0]">
      <g shapeRendering="crispEdges">
        <path d="M797 229.500 H3704" stroke="#fff" strokeWidth="3" />
        <path d="M798.500 228 V294" stroke="#fff" strokeWidth="3" />
        <rect x="795.500" y="226.500" width="2910" height="69" fill="none" stroke="#9f9f9f" strokeWidth="3" />
        {ticks.map((n) => (
          <rect key={n} x={Math.round(842 + n * UNIT)} y={n % 10 ? 279 : 270} width="3" height={n % 10 ? 12 : 21} />
        ))}
        <rect x="2009" y="232" width="3" height="62" />
      </g>
      <g className="font-['Open_Sans']" fontSize="36" textAnchor="middle" letterSpacing="-2.600">
        <text x="1315" y="264">400</text>
        <text x="2263" y="264">800</text>
        <text x="3211" y="264">1200</text>
      </g>
    </svg>
  );
}
function VRuler() {
  const ticks = Array.from({ length: 33 }, (_, n) => n - 26);
  return (
    <svg viewBox="719 300 72 1632" className="h-[1632px] w-[72px] shrink-0 bg-[#f0f0f0]">
      <g shapeRendering="crispEdges">
        <path d="M722 304.500 H788 M723.500 303 V1926 M719 1930.500 H791" stroke="#fff" strokeWidth="3" />
        <rect x="720.500" y="301.500" width="69" height="1626" fill="none" stroke="#9f9f9f" strokeWidth="3" />
        {ticks.map((n) => (
          <rect key={n} x={n % 10 ? 773 : 764} y={Math.round(1548 + n * UNIT)} width={n % 10 ? 12 : 21} height="3" />
        ))}
        <rect x="725" y="1215" width="66" height="3" />
      </g>
      <g className="font-['Open_Sans']" fontSize="36" textAnchor="middle" letterSpacing="-2">
        <text transform="translate(760 601) rotate(-90)">400</text>
        <text transform="translate(760 1075) rotate(-90)">200</text>
        <text transform="translate(760 1549) rotate(-90)">0</text>
      </g>
    </svg>
  );
}

/* ---------- drawing canvas ---------- */
function Canvas() {
  return (
    <svg viewBox="800 306 2859 1575" className="h-[1575px] w-[2859px] shrink-0 bg-white" fill="none" strokeWidth="3">
      <rect x="800" y="1551" width="2859" height="3" fill="#c0c0c0" />
      <rect x="800" y="1554" width="2859" height="3" fill="#7f7f7f" />
      <rect x="800" y="1557" width="2859" height="324" fill="#dcdcdc" />
      <g stroke="#000" shapeRendering="crispEdges">
        <path d="M2015 646 H1498 V409 H1512 L1528 444 L1555 482 L1597 524 L1638 556 L1692 582 L1737 600 L1791 610 H1871 L1921 600 L1979 577 L2021 556 L2062 524 L2104 482 L2123 454 L2147 409 H2161 V646" />
        <path d="M3659 901 H1498 V664 H1512 L1528 700 L1555 739 L1597 779 L1638 810 L1692 837 L1737 852 L1788 862 H1868 L1919 852 L1967 837 L2015 811" />
        <circle cx="1829" cy="493" r="7" />
        <circle cx="1859" cy="764" r="7" />
        <path d="M1680 1295 H1693 V1307 H1680 Z M1686 1307 V1311" />
        <path d="M2720 462 L2822 430 L2899 418 L2988 412 H3038 L3123 420 L3211 434 L3275 447 L3332 462 L3395 489 L3453 520 L3520 556 L3573 592 L3659 668" />
        <path d="M3417 901 V678 L3409 676 V668 L3415 664 H3460 L3466 668 V676 L3460 678 V901" />
        <path d="M3177 943 V1168 L3170 1171 V1181 H3226 V1171 L3219 1168 V943 Z" />
        <path d="M3629 1393 H3634 M3634 1388 L3637 1385 H3643 L3646 1388 V1397 L3644 1399 H3634 Z" />
      </g>
      <g stroke="#e512d8" shapeRendering="crispEdges" strokeDasharray="9 9">
        <path d="M1712 943 H3659" />
        <path d="M1706 945 L1782 1025 L1833 1071 L1890 1120 L1960 1172 L2015 1204 C2250 1350 2500 1421 2855 1421 L2930 1417 L3000 1406 L3066 1393 L3150 1375 L3235 1352 L3310 1325 L3380 1294 L3440 1262 L3503 1222 L3560 1187 L3617 1150 L3659 1114" />
      </g>
    </svg>
  );
}

const Chevron = ({ d, className }: { d: string; className: string }) => (
  <svg viewBox="0 0 7 7" className={className + " h-[21px] w-[21px] shrink-0"} fill="none" stroke="#606060" strokeWidth="1.700">
    <path d={d} />
  </svg>
);

function Workspace() {
  return (
    <main className="flex w-[2991px] shrink-0 flex-col bg-[#f0f0f0]">
      <Toolbar />
      <div className="flex h-[75px] items-start gap-[3px] bg-white">
        <div className="h-[72px] w-[72px] border-3 border-[#9f9f9f] border-r-[#e0e0e0] border-b-[#e0e0e0] bg-[#f0f0f0]">
          <svg viewBox="0 0 66 66" className="h-full w-full border-t-3 border-l-3 border-[#666]" shapeRendering="crispEdges">
            <path d="M30 3 V9 M30 18 V27 M30 33 V45 M30 54 V63 M6 39 H15 M25 39 H36 M43 39 H51" stroke="#000" strokeWidth="3" />
          </svg>
        </div>
        <HRuler />
      </div>
      <div className="flex h-[1632px] gap-[3px] bg-white">
        <VRuler />
        <div className="flex w-[2916px] flex-col border-t-3 border-l-3 border-[#9f9f9f]">
          <div className="flex grow flex-col border-t-3 border-l-3 border-black bg-[#f0f0f0]">
            <div className="flex h-[1578px]">
              <div className="w-[2862px] shrink-0 bg-white"><Canvas /></div>
              <div className="flex w-[48px] flex-col items-center bg-[#f0f0f0]">
                <Chevron d="M.5 5.500 L3.500 2.200 L6.500 5.500" className="mt-[17px] -ml-[3px]" />
                <div className="mt-[865px] h-[344px] w-[45px] self-start bg-[#cdcdcd]" />
                <Chevron d="M.5 1.500 L3.500 4.800 L6.500 1.500" className="mt-[293px] -ml-[3px]" />
              </div>
            </div>
            <div className="flex h-[45px] items-center">
              <Chevron d="M5.500 .5 L2 3.500 L5.500 6.500" className="ml-[14px]" />
              <div className="ml-[994px] h-[45px] w-[700px] bg-[#c0c0c0]" />
              <Chevron d="M1.500 .5 L5 3.500 L1.500 6.500" className="ml-[1096px]" />
            </div>
          </div>
        </div>
      </div>
    </main>
  );
}

/* ---------- context menu ---------- */
type Item = { t: string; k?: string; sub?: boolean; off?: boolean; on?: boolean; tight?: boolean } | null;
const menuItems: Item[] = [
  { t: "Undo", k: "Ctrl+Z" },
  { t: "Redo", k: "Ctrl+Y" },
  null,
  { t: "Cut", k: "Ctrl+X" },
  { t: "Copy", k: "Ctrl+C" },
  { t: "Paste", k: "Ctrl+V" },
  { t: "Delete", k: "Del" },
  null,
  { t: "Selection", sub: true },
  null,
  { t: "Activate Layer of Selection" },
  null,
  { t: "Group Objects", off: true },
  { t: "Ungroup Objects", sub: true, off: true },
  { t: "Break Text Block Into Lines", off: true, tight: true },
  { t: "Convert To Curves", off: true, tight: true },
  { t: "Remove Text From The Curve", off: true, tight: true },
  { t: "Bake Rotated Bounds", off: true, tight: true },
  null,
  { t: "Join / Close Vectors...", sub: true, off: true },
  { t: "Node Edit Mode", k: "N", on: true },
  { t: "Guide Lines", sub: true },
  null,
  { t: "Object Properties...", off: true },
  null,
  { t: "Copy to Layer", sub: true },
  { t: "Move to Layer", sub: true },
  { t: "Move to Sheet", sub: true },
];

function ContextMenu() {
  return (
    <div className="absolute top-[456px] left-[2015px] flex">
      <div className="h-[1600px] w-[836px] border-3 border-[#c9c9c9] bg-[#f2f2f2] bg-linear-to-r from-[#efefef] from-[90px] to-[#f2f2f2] to-[90px] px-[6px] pt-[6px] pr-[5px]">
        {menuItems.map((m, i) =>
          m === null ? (
            <div key={i} className="ml-[84px] flex h-[21px] items-center">
              <div className="h-[3px] w-full bg-[#d6d6d6]" />
            </div>
          ) : (
            <div
              key={i}
              className={
                "flex h-[66px] items-center pb-px pl-[96px] " +
                (m.tight ? "tracking-[-1.150px] " : "tracking-[-.780px] ") +
                (m.on ? "bg-[#91c9f7] text-black" : m.off ? "text-[#6d6d6d]" : "text-black")
              }
            >
              <span className="grow whitespace-pre">{m.t}</span>
              {m.k && <span className="mr-[53px] tracking-[.2px]">{m.k}</span>}
              {m.sub && (
                <svg viewBox="0 0 5 8" className="mr-[26px] h-[24px] w-[15px]" fill="none" stroke={m.off ? "#b0b0b0" : "#444"} strokeWidth="1.100">
                  <path d="M.8 .8 L4 4 L.8 7.200" />
                </svg>
              )}
            </div>
          )
        )}
      </div>
      <div className="mt-[18px] h-[1600px] w-[11px] bg-linear-to-r from-[#00000080] to-[#00000008]" />
    </div>
  );
}

export default function App() {
  return (
    <div className="relative h-[2001px] w-[3786px] overflow-hidden bg-[#e4e4e4] font-['Open_Sans',sans-serif] text-[36px] leading-none text-black">
      <Defs />
      <div className="flex">
        <div className="flex h-[1989px] w-[3776px] shrink-0 flex-col bg-[#f0f0f0]">
          <div className="flex h-[60px] bg-white">
            <svg viewBox="0 0 34 33" className="h-[33px] w-[34px] shrink-0">
              <path d="M3 0 H11 V24 Q5 14 3 0 Z" fill="#1f3f7c" />
              <path d="M14 0 H34 Q28 18 12 33 Q14 16 14 0 Z" fill="#24498f" />
            </svg>
            <span className="ml-[15px] h-[30px] w-[3372px] leading-[30px] tracking-[-.850px]">VCarve Pro Makerspace Client 10.512 - [cnc]</span>
            <svg viewBox="3421 0 300 24" className="h-[24px] w-[300px]" fill="none" stroke="#000" strokeWidth="2">
              <path d="M3421 12 H3441 M3559 3 H3577 V21 H3559 Z M3697 3 L3715 21 M3715 3 L3697 21" />
            </svg>
          </div>
          <nav className="flex h-[75px] items-center bg-linear-to-r from-[#f0f0f0] from-30% to-[#fbfbfb] to-80% pt-px pl-2 tracking-[-.9px]">
            <span className="w-[102px]">File</span>
            <span className="w-[108px]">Edit</span>
            <span className="w-[150px]">Model</span>
            <span className="w-[204px]">Toolpaths</span>
            <span className="w-[122px]">View</span>
            <span className="w-[177px]">Gadgets</span>
            <span className="grow">Help</span>
            <svg viewBox="0 0 121 27" className="mt-[-7px] mr-[20px] h-[27px] w-[121px]" fill="none" stroke="#000">
              <path d="M0 24 H21" strokeWidth="6" />
              <path d="M52 10 V3 H71 V16 H66" strokeWidth="3" />
              <path d="M51 2.500 H72" strokeWidth="5" />
              <rect x="46.500" y="11" width="18.500" height="14.500" fill="#fff" strokeWidth="3" />
              <path d="M45 12 H66" strokeWidth="5" />
              <path d="M98 2 L119 23 M119 2 L98 23" strokeWidth="6.500" />
            </svg>
          </nav>
          <div className="flex h-[1797px]">
            <LeftPanel />
            <div className="w-3 shrink-0" />
            <Workspace />
            <div className="w-[66px] bg-[#fbfbfb] pt-[6px] pl-[6px]">
              <div className="flex h-[198px] w-[60px] justify-center rounded-l-lg border-3 border-r-0 border-[#9f9f9f] bg-linear-to-r from-[#f2f2f2] to-[#fbfbfb] pt-[15px]">
                <span className="font-['DejaVu_Sans'] text-[34px] leading-[44px] tracking-[-.9px] [writing-mode:vertical-rl]">Toolpaths</span>
              </div>
            </div>
          </div>
          <footer className="flex h-[57px] items-center border-t-3 border-[#d6d6d6] pt-[2px]">
            <span className="-ml-[20px] w-[2866px] tracking-[-1.050px] whitespace-pre">Enter node editing mode</span>
            <span className="w-[870px] tracking-[-1.200px] whitespace-pre">:203.136  L:0</span>
            <i className="block h-[47px] w-[3px] bg-[#d6d6d6]" />
            <svg viewBox="0 0 24 24" className="ml-[27px] mt-[10px] h-[24px] w-[24px]" fill="#bfbfbf">
              <path d="M18 0 H24 V5 H18Z M9 9 H15 V14 H9Z M18 9 H24 V14 H18Z M0 18 H6 V23 H0Z M9 18 H15 V23 H9Z M18 18 H24 V23 H18Z" />
            </svg>
          </footer>
        </div>
        <div className="flex w-[10px] flex-col">
          <div className="h-[69px] bg-[#3a3b3d]" />
          <div className="h-[111px] bg-[#2c2d31]" />
          <div className="h-[1809px] border-l-3 border-[#6b6b6b] bg-linear-to-r from-[#b8b8b8] to-[#dadada]" />
        </div>
      </div>
      <div className="h-3 overflow-hidden border-t-3 border-[#666] bg-linear-to-b from-[#b5b5b5] to-[#e2e2e2]">
        <p className="-mt-[19px] ml-[50px] text-[41px] leading-[52px] font-light tracking-[.6px] whitespace-pre text-[#333]">
          in the plane so all the components would fit on 600x300mm plywood plate. I then created a new sketch
        </p>
      </div>
      <ContextMenu />
    </div>
  );
}
